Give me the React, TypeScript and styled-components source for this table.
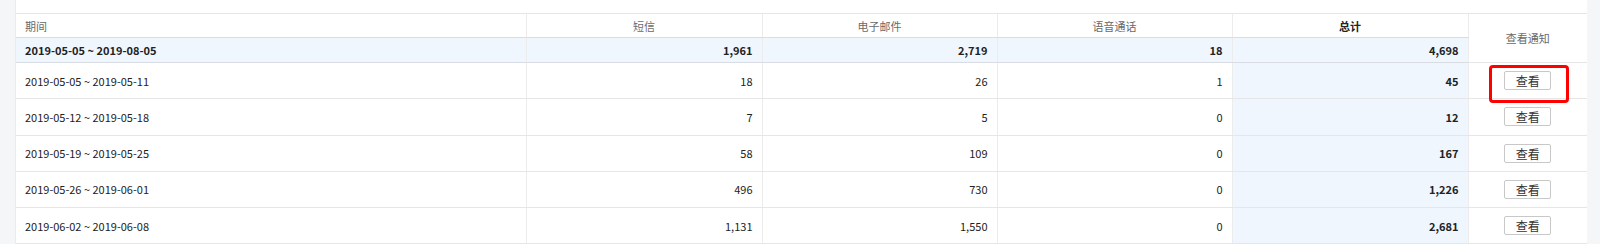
import React from "react";
import styled, { createGlobalStyle } from "styled-components";

const GlobalStyle = createGlobalStyle`
  html, body { margin: 0; padding: 0; background: #f5f6f7; }
  body { font-family: "Noto Sans CJK SC", "Liberation Sans", sans-serif; }
`;

const Page = styled.div`
  display: flex;
  padding: 0 13px 0 16px;
  height: 244px;
  box-sizing: border-box;
`;

const Panel = styled.div`
  flex: 1;
  background: #ffffff;
  padding-top: 13px;
  box-shadow: -1px 0 0 #ebebeb;
`;

const Table = styled.table`
  width: 100%;
  border-collapse: collapse;
  table-layout: fixed;
  font-size: 11px;
  line-height: 14px;
  color: #222;
`;

const HeadRow = styled.tr`
  height: 24px;
`;

const Th = styled.th<{ $align?: "left" | "center"; $strong?: boolean }>`
  font-weight: ${(p) => (p.$strong ? 700 : 400)};
  color: ${(p) => (p.$strong ? "#222" : "#6a6a6a")};
  text-align: ${(p) => p.$align ?? "center"};
  padding: 0 9px;
  border-top: 1px solid #e6e6e6;
  border-left: 1px solid #ececec;
  border-bottom: 1px solid #d9dde3;
  &:first-child { border-left: none; }
`;

const ActionTh = styled(Th)`
  border-bottom: 1px solid #e6e6e6;
`;

const SumRow = styled.tr`
  height: 25px;
  background: #eff6fe;
  font-weight: 700;
`;

const BodyRow = styled.tr`
  height: 36.25px;
`;

const Td = styled.td<{ $align?: "left" | "right" | "center"; $total?: boolean; $sum?: boolean }>`
  text-align: ${(p) => p.$align ?? "right"};
  padding: 0 9px;
  border-left: 1px solid #ececec;
  border-bottom: 1px solid ${(p) => (p.$sum ? "#d9dde3" : "#e6e6e6")};
  background: ${(p) => (p.$total || p.$sum ? "#eff6fe" : "transparent")};
  font-weight: ${(p) => (p.$total || p.$sum ? 700 : 400)};
  white-space: nowrap;
  &:first-child { border-left: none; }
`;

const ActionTd = styled.td`
  position: relative;
  text-align: center;
  border-left: 1px solid #ececec;
  border-bottom: 1px solid #e6e6e6;
  padding: 0;
`;

const ViewButton = styled.button`
  width: 47px;
  height: 19px;
  padding: 0;
  border: 1px solid #c8c8c8;
  border-radius: 2px;
  background: #ffffff;
  color: #333;
  font-family: "Noto Sans CJK SC", sans-serif;
  font-size: 12px;
  line-height: 17px;
  vertical-align: middle;
`;

const Highlight = styled.div`
  position: absolute;
  left: 20px;
  top: 2px;
  width: 80px;
  height: 38px;
  box-sizing: border-box;
  border: 3px solid #ff0000;
  border-radius: 4px;
  pointer-events: none;
`;

type Row = { period: string; sms: string; mail: string; voice: string; total: string };

const rows: Row[] = [
  { period: "2019-05-05 ~ 2019-05-11", sms: "18", mail: "26", voice: "1", total: "45" },
  { period: "2019-05-12 ~ 2019-05-18", sms: "7", mail: "5", voice: "0", total: "12" },
  { period: "2019-05-19 ~ 2019-05-25", sms: "58", mail: "109", voice: "0", total: "167" },
  { period: "2019-05-26 ~ 2019-06-01", sms: "496", mail: "730", voice: "0", total: "1,226" },
  { period: "2019-06-02 ~ 2019-06-08", sms: "1,131", mail: "1,550", voice: "0", total: "2,681" },
];

export default function App() {
  return (
    <>
      <GlobalStyle />
      <Page>
        <Panel>
          <Table>
            <colgroup>
              <col style={{ width: 510 }} />
              <col style={{ width: 236 }} />
              <col style={{ width: 235 }} />
              <col style={{ width: 235 }} />
              <col style={{ width: 236 }} />
              <col style={{ width: 119 }} />
            </colgroup>
            <thead>
              <HeadRow>
                <Th $align="left">期间</Th>
                <Th>短信</Th>
                <Th>电子邮件</Th>
                <Th>语音通话</Th>
                <Th $strong>总计</Th>
                <ActionTh rowSpan={2}>查看通知</ActionTh>
              </HeadRow>
              <SumRow>
                <Td $align="left" $sum>2019-05-05 ~ 2019-08-05</Td>
                <Td $sum>1,961</Td>
                <Td $sum>2,719</Td>
                <Td $sum>18</Td>
                <Td $sum>4,698</Td>
              </SumRow>
            </thead>
            <tbody>
              {rows.map((r, i) => (
                <BodyRow key={r.period}>
                  <Td $align="left">{r.period}</Td>
                  <Td>{r.sms}</Td>
                  <Td>{r.mail}</Td>
                  <Td>{r.voice}</Td>
                  <Td $total>{r.total}</Td>
                  <ActionTd>
                    <ViewButton type="button">查看</ViewButton>
                    {i === 0 && <Highlight />}
                  </ActionTd>
                </BodyRow>
              ))}
            </tbody>
          </Table>
        </Panel>
      </Page>
    </>
  );
}
